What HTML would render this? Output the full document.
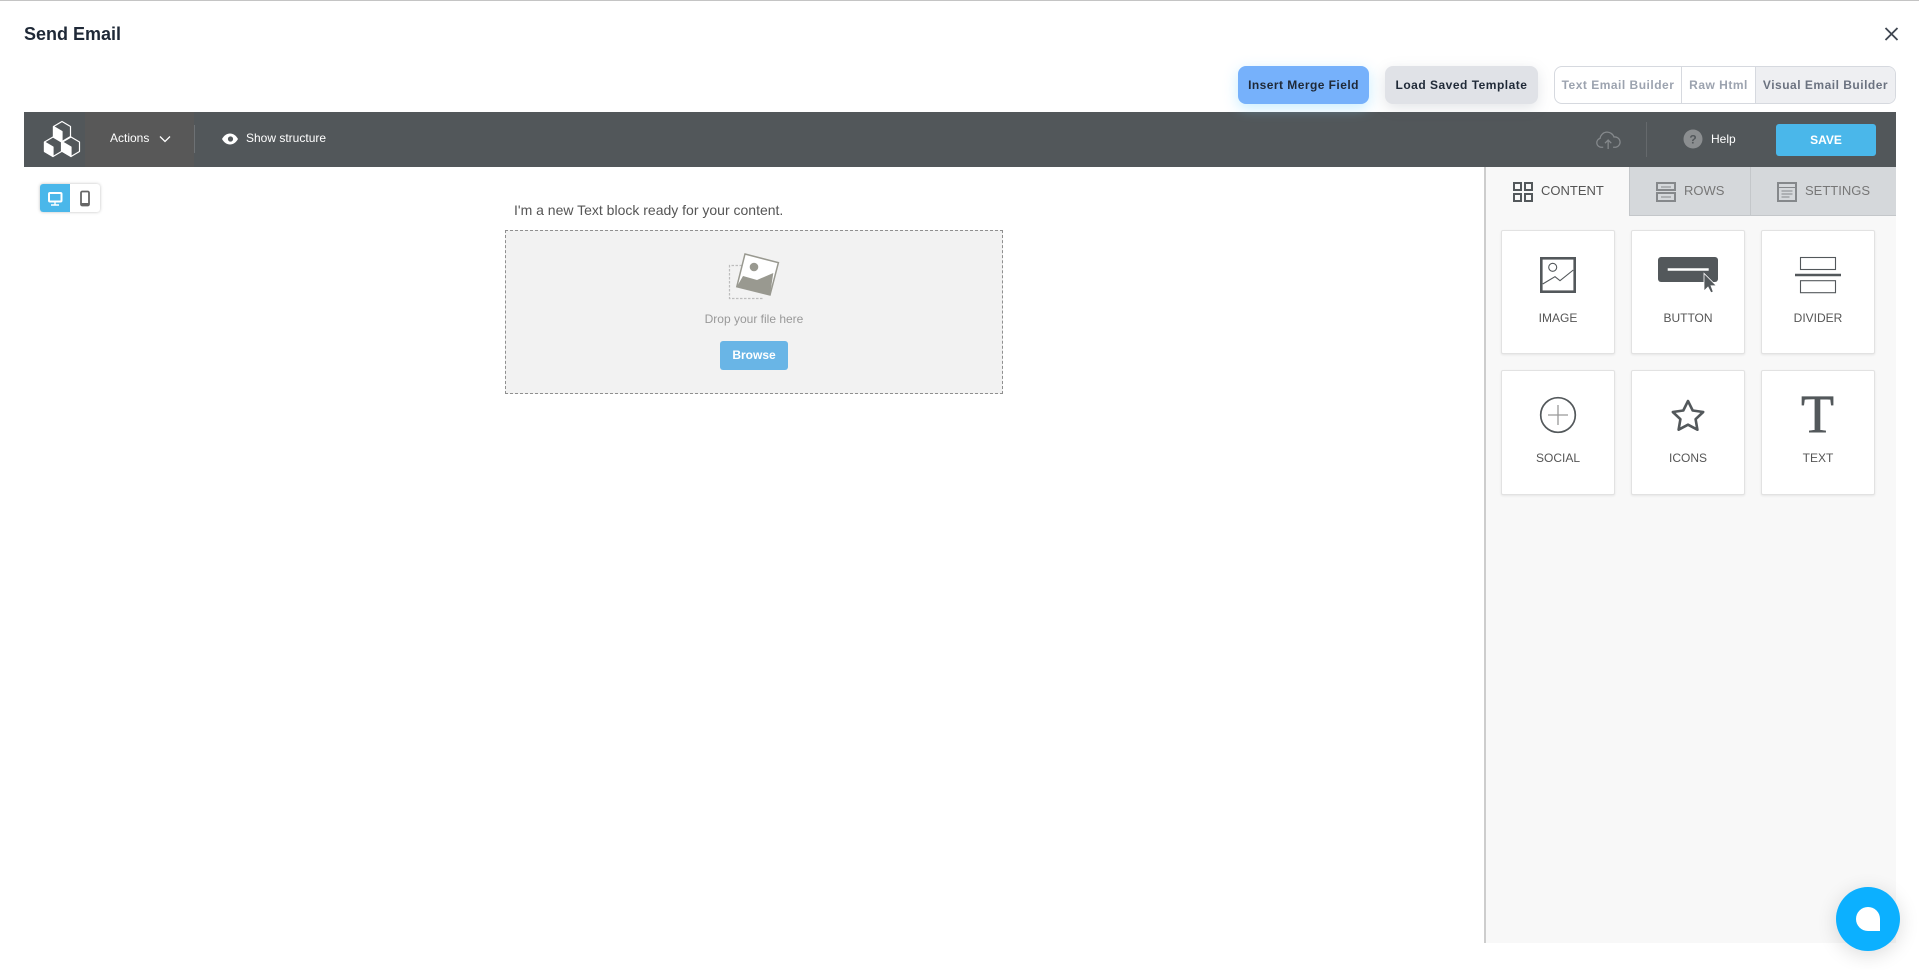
<!DOCTYPE html>
<html lang="en"><head><meta charset="utf-8"><title>Send Email</title>
<style>
html,body{margin:0;padding:0;background:#fff;width:1919px;height:970px;overflow:hidden}
body{position:relative;font-family:"Liberation Sans",sans-serif}
.a{position:absolute;white-space:nowrap}
.c{display:flex;align-items:center;justify-content:center}
.card{position:absolute;width:112px;background:#fff;border:1px solid #e2e2e2;border-radius:2px;box-shadow:0 1px 2px rgba(0,0,0,.08);box-sizing:content-box}
.lab{position:absolute;width:114px;text-align:center;font-size:12px;line-height:14px;color:#555}
</style></head><body>
<div class="a" style="left:0;top:0;width:1919px;height:1px;background:#c4c4c4"></div>
<div class="a" style="left:24px;top:23px;font-size:18px;line-height:22px;font-weight:700;color:#1f2937">Send Email</div>

<div class="a" style="left:24px;top:112px;width:1872px;height:55px;background:#52575a"></div>
<div class="a" style="left:85px;top:112px;width:109px;height:55px;background:#585858"></div>
<div class="a" style="left:194px;top:125px;width:1px;height:28px;background:#6d7174"></div>
<div class="a" style="left:1646px;top:122px;width:1px;height:35px;background:#65696c"></div>

<div class="a c" style="left:1238px;top:66px;width:131px;height:38px;border-radius:8px;background:#76b1fb;box-shadow:0 4px 14px rgba(130,215,255,.45);font-size:12px;font-weight:700;color:#1f2937;letter-spacing:.45px">Insert Merge Field</div>
<div class="a c" style="left:1385px;top:66px;width:153px;height:38px;border-radius:8px;background:#e0e2e7;box-shadow:0 4px 14px rgba(100,110,130,.18);font-size:12px;font-weight:700;color:#1f2937;letter-spacing:.5px">Load Saved Template</div>
<div class="a" style="left:1554px;top:66px;width:342px;height:38px;box-sizing:border-box;border:1px solid #d6d9df;border-radius:8px;background:#fff;overflow:hidden;font-size:12px;font-weight:700;color:#9ca3af;letter-spacing:.5px">
  <div class="a c" style="left:0;top:0;width:126px;height:36px">Text Email Builder</div>
  <div class="a c" style="left:126px;top:0;width:75px;height:36px;box-sizing:border-box;border-left:1px solid #d6d9df;border-right:1px solid #d6d9df">Raw Html</div>
  <div class="a c" style="left:201px;top:0;width:139px;height:36px;background:#eeeff2;color:#6b7280">Visual Email Builder</div>
</div>

<div class="a" style="left:110px;top:131px;font-size:12px;line-height:14px;color:#fff">Actions</div>
<div class="a" style="left:246px;top:131px;font-size:12px;line-height:14px;color:#fff">Show structure</div>
<div class="a" style="left:1711px;top:132px;font-size:12px;line-height:14px;color:#fff">Help</div>
<div class="a c" style="left:1776px;top:124px;width:100px;height:32px;border-radius:3px;background:#4ab7ea;color:#fff;font-size:12px;font-weight:700">SAVE</div>

<div class="a" style="left:40px;top:184px;width:60px;height:28px;border-radius:3px;background:#fff;box-shadow:0 0 3px rgba(0,0,0,.25);overflow:hidden"><div style="width:30px;height:28px;background:#4ab7ea"></div></div>

<div class="a" style="left:514px;top:202px;font-size:14px;line-height:16px;color:#555">I'm a new Text block ready for your content.</div>
<div class="a" style="left:505px;top:230px;width:498px;height:164px;box-sizing:border-box;border:1px dashed #8f8f8f;background:#f2f2f2"></div>
<div class="a" style="left:505px;top:312px;width:498px;text-align:center;font-size:12px;line-height:14px;color:#999">Drop your file here</div>
<div class="a c" style="left:720px;top:341px;width:68px;height:29px;box-sizing:border-box;padding-bottom:2px;border-radius:3px;background:#69b5e6;color:#fff;font-size:12px;font-weight:700">Browse</div>

<div class="a" style="left:1484px;top:167px;width:412px;height:776px;background:#f8f8f8;border-left:2px solid #cdcdcd;box-sizing:border-box"></div>
<div class="a" style="left:1629px;top:167px;width:267px;height:49px;background:#d5d8db;border-left:1px solid #c4c7ca;border-bottom:1px solid #c4c7ca;box-sizing:border-box"></div>
<div class="a" style="left:1750px;top:167px;width:1px;height:48px;background:#c4c7ca"></div>
<div class="a" style="left:1541px;top:183px;font-size:13px;line-height:15px;color:#555">CONTENT</div>
<div class="a" style="left:1684px;top:183px;font-size:13px;line-height:15px;color:#777">ROWS</div>
<div class="a" style="left:1805px;top:183px;font-size:13px;line-height:15px;color:#777">SETTINGS</div>

<div class="card" style="left:1501px;top:230px;height:122px"></div>
<div class="card" style="left:1631px;top:230px;height:122px"></div>
<div class="card" style="left:1761px;top:230px;height:122px"></div>
<div class="card" style="left:1501px;top:370px;height:123px"></div>
<div class="card" style="left:1631px;top:370px;height:123px"></div>
<div class="card" style="left:1761px;top:370px;height:123px"></div>
<div class="lab" style="left:1501px;top:311px">IMAGE</div>
<div class="lab" style="left:1631px;top:311px">BUTTON</div>
<div class="lab" style="left:1761px;top:311px">DIVIDER</div>
<div class="lab" style="left:1501px;top:451px">SOCIAL</div>
<div class="lab" style="left:1631px;top:451px">ICONS</div>
<div class="lab" style="left:1761px;top:451px">TEXT</div>

<div class="a" style="left:1836px;top:887px;width:64px;height:64px;border-radius:50%;background:#0cb0ff;box-shadow:0 4px 20px rgba(0,0,0,.14)"></div>
<div class="a" style="left:1856px;top:907px;width:24px;height:24px;background:#fff;border-radius:12px 12px 0 12px"></div>

<svg class="a" style="left:0;top:0" width="1919" height="970" viewBox="0 0 1919 970" fill="none">
  <!-- close -->
  <path d="M1885.500 28L1897.500 40M1897.500 28L1885.500 40" stroke="#3f4650" stroke-width="1.800"/>
  <!-- logo -->
  <g stroke="#fff" stroke-width="1.200" stroke-linejoin="round">
    <path d="M62 121.500l8.500 5v10l-8.500 5-8.500-5v-10z"/>
    <path d="M53 137l8.500 5v9.500l-8.500 5-8.500-5V142z"/>
    <path d="M71 137l8.500 5v9.500l-8.500 5-8.500-5V142z"/>
    <path d="M53.500 126.500l8.500 5v10l-8.500-5z" fill="#fff"/>
    <path d="M44.500 142l8.500 5v9.500l-8.500-5z" fill="#fff"/>
    <path d="M62.500 142l8.500 5v9.500l-8.500-5z" fill="#fff"/>
  </g>
  <!-- chevron -->
  <path d="M160 136.500l5 5 5-5" stroke="#fff" stroke-width="1.300"/>
  <!-- eye -->
  <path d="M222 139c2-3.600 5-5.500 8-5.500s6 1.900 8 5.500c-2 3.600-5 5.500-8 5.500s-6-1.900-8-5.500z" fill="#fff"/>
  <circle cx="230.500" cy="139" r="2.600" fill="#53585b"/>
  <!-- cloud -->
  <g transform="translate(1608.600 140) scale(.9) translate(-1608 -140)">
  <path d="M1602 148h-2.500a5 5 0 0 1-1-9.800 8 8 0 0 1 15.500-1.500 5.500 5.500 0 0 1 2 11.300h-3" stroke="#85898c" stroke-width="1.400"/>
  <path d="M1607.500 150v-10m-3.500 3.500l3.500-3.500 3.500 3.500" stroke="#85898c" stroke-width="1.400"/>
  </g>
  <!-- help -->
  <circle cx="1693" cy="139" r="9.500" fill="#8b8e90"/>
  <text x="1693" y="143.500" text-anchor="middle" font-family="Liberation Sans" font-size="12" font-weight="700" fill="#53585b">?</text>
  <!-- device icons -->
  <rect x="49" y="193" width="12.500" height="8.500" rx="1" stroke="#fff" stroke-width="2"/>
  <path d="M55 202v2.500M51 205h8" stroke="#fff" stroke-width="1.400"/>
  <rect x="81" y="191.500" width="8" height="14" rx="1.300" stroke="#666" stroke-width="1.800"/>
  <path d="M81 203h8v2h-8z" fill="#666"/>
  <!-- drop icon -->
  <path d="M742 265.500h-12.500v33h34" stroke="#bdbdbd" stroke-width="1.200" stroke-dasharray="2.500 1.500"/>
  <path d="M745 254L778.400 262.700L770 295L736.800 286.700Z" fill="#fff" stroke="#999990" stroke-width="1.500"/>
  <path d="M736.800 286.700L743 276L757 280L773.300 273L770 295Z" fill="#999990"/>
  <circle cx="754" cy="267" r="4.300" fill="#999990"/>
  <!-- tab icons -->
  <g stroke="#53585b" stroke-width="2"><rect x="1514" y="183" width="7" height="7"/><rect x="1525" y="183" width="7" height="7"/><rect x="1514" y="194" width="7" height="7"/><rect x="1525" y="194" width="7" height="7"/></g>
  <g stroke="#85888b" stroke-width="2"><rect x="1657" y="183" width="18" height="7"/><rect x="1657" y="193" width="18" height="8"/></g>
  <path d="M1661 187h10M1661 197h10" stroke="#85888b"/>
  <rect x="1778" y="183" width="18" height="18" stroke="#85888b" stroke-width="2"/>
  <path d="M1778 187.500h18M1781.500 191h11M1781.500 194h11M1781.500 197h8" stroke="#85888b"/>
  <!-- image card -->
  <rect x="1541.300" y="258.300" width="33.400" height="33.400" stroke="#53585b" stroke-width="2.600"/>
  <circle cx="1552.700" cy="267.300" r="4" stroke="#53585b" stroke-width="1.100"/>
  <path d="M1542.700 284L1555 276.700L1560 280.700L1573.300 270" stroke="#53585b" stroke-width="1.100"/>
  <!-- button card -->
  <rect x="1658" y="257" width="60" height="25" rx="3" fill="#53585b"/>
  <path d="M1667.700 269.500h41" stroke="#fff" stroke-width="2.400"/>
  <path d="M1704 273.300L1704 291L1708 287L1711 292.800L1713.300 291.800L1711 285.800L1716.500 285.800Z" fill="#53585b" stroke="#fff" stroke-width=".8"/>
  <!-- divider card -->
  <rect x="1800.500" y="257.500" width="35" height="12" stroke="#53585b" stroke-width="1.100"/>
  <path d="M1795 275h46" stroke="#53585b" stroke-width="2.600"/>
  <rect x="1800.500" y="280.700" width="35" height="12" stroke="#53585b" stroke-width="1.100"/>
  <!-- social -->
  <circle cx="1558" cy="415" r="17.300" stroke="#53585b" stroke-width="1.700"/>
  <path d="M1548 415h20M1558 405v20" stroke="#999" stroke-width="1.300"/>
  <!-- star -->
  <path d="M1688 401l4.700 9.500 10.500 1.500-7.600 7.200 1.800 10.500-9.400-5-9.400 5 1.800-10.500-7.600-7.200 10.500-1.500z" stroke="#53585b" stroke-width="2.600" stroke-linejoin="round"/>
  <text x="1817.500" y="432" text-anchor="middle" font-family="Liberation Serif" font-size="54" fill="#53585b" stroke="#53585b" stroke-width=".6">T</text>
</svg>
</body></html>
